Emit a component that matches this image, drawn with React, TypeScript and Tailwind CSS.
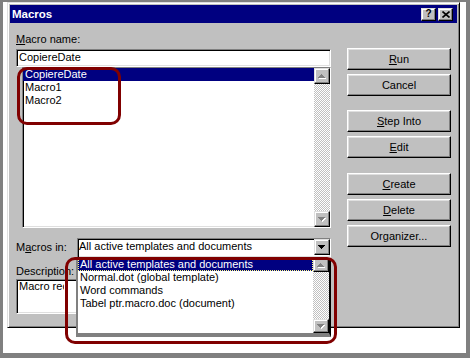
import React from "react";

const sunken =
  "border border-t-[#808080] border-l-[#808080] border-b-white border-r-white shadow-[inset_1px_1px_0_#000,inset_-1px_-1px_0_#dfdfdf]";
const raised =
  "border border-t-white border-l-white border-r-black border-b-black shadow-[inset_-1px_-1px_0_#808080,inset_1px_1px_0_#dfdfdf]";
const raisedScroll =
  "border border-t-[#dfdfdf] border-l-[#dfdfdf] border-r-black border-b-black shadow-[inset_-1px_-1px_0_#808080,inset_1px_1px_0_#ffffff]";
const dither =
  "bg-[repeating-conic-gradient(#c0c0c0_0%_25%,#ffffff_0%_50%)] bg-[length:2px_2px]";

function Tri({ dir, color, dx = 0, dy = 0 }: { dir: "up" | "down"; color: string; dx?: number; dy?: number }) {
  const rows = dir === "up" ? [0, 1, 2, 3] : [3, 2, 1, 0];
  return (
    <g fill={color}>
      {rows.map((r, i) => (
        <rect key={i} x={3 - r + dx} y={i + dy} width={2 * r + 1} height={1} />
      ))}
    </g>
  );
}

function Arrow({ dir, disabled }: { dir: "up" | "down"; disabled?: boolean }) {
  return (
    <svg width="8" height="5" viewBox="0 0 8 5" shapeRendering="crispEdges">
      {disabled && <Tri dir={dir} color="#ffffff" dx={1} dy={1} />}
      <Tri dir={dir} color={disabled ? "#808080" : "#000000"} />
    </svg>
  );
}

function ScrollBtn({ dir, disabled, h = 16 }: { dir: "up" | "down"; disabled?: boolean; h?: number }) {
  return (
    <div
      className={`w-[16px] bg-[#c0c0c0] flex items-center justify-center ${raisedScroll}`}
      style={{ height: h }}
    >
      <Arrow dir={dir} disabled={disabled} />
    </div>
  );
}

function Btn({ children }: { children: React.ReactNode }) {
  return (
    <div
      className={`w-[104px] h-[22px] bg-[#c0c0c0] flex items-center justify-center text-[11px] leading-[13px] text-black ${raised}`}
    >
      <span>{children}</span>
    </div>
  );
}

export default function App() {
  return (
    <div className="relative w-[470px] h-[358px] bg-[#808080] pt-[2px] pl-[3px] pr-[4px] pb-[5px] overflow-hidden font-['Liberation_Sans',Arial,sans-serif] text-[11px] leading-[13px] text-black">
      <div className="w-full h-full bg-white pl-[4px]">
        {/* Dialog */}
        <div className="w-[453px] h-[326px] bg-[#c0c0c0] border border-t-[#dfdfdf] border-l-[#dfdfdf] border-r-black border-b-black shadow-[inset_1px_1px_0_#fff,inset_-1px_-1px_0_#808080] p-[2px] flex flex-col">
          {/* Title bar */}
          <div className="h-[18px] bg-[#000080] flex items-center pl-[2px] pr-[4px]">
            <span className="text-white font-bold text-[11.5px] leading-[13px]">Macros</span>
            <div className="ml-auto flex gap-[2px]">
              <div className={`w-[15px] h-[13px] bg-[#c0c0c0] flex items-center justify-center ${raisedScroll}`}>
                <span className="font-bold text-[10px] leading-[10px] text-black">?</span>
              </div>
              <div className={`w-[15px] h-[13px] bg-[#c0c0c0] flex items-center justify-center ${raisedScroll}`}>
                <svg width="8" height="7" viewBox="0 0 8 7">
                  <path d="M0.5 0.5 L7.5 6.5 M7.5 0.5 L0.5 6.5" stroke="#000" strokeWidth="1.6" />
                </svg>
              </div>
            </div>
          </div>

          {/* Content */}
          <div className="flex pl-[6px]">
            {/* Left column */}
            <div className="w-[315px] flex flex-col pt-[10px]">
              <div className="h-[13px]">
                <u>M</u>acro name:
              </div>
              <div className={`mt-[3px] h-[18px] bg-white pl-[2px] pt-[1px] ${sunken}`}>CopiereDate</div>
              {/* Macro list */}
              <div className={`ml-[6px] w-[309px] h-[161px] bg-white flex ${sunken}`}>
                <div className="flex-1 flex flex-col">
                  <div className="h-[13px] bg-[#000080] text-white pl-[2px]">CopiereDate</div>
                  <div className="h-[13px] pl-[2px]">Macro1</div>
                  <div className="h-[13px] pl-[2px]">Macro2</div>
                </div>
                <div className="w-[16px] flex flex-col">
                  <ScrollBtn dir="up" disabled />
                  <div className={`flex-1 ${dither}`} />
                  <ScrollBtn dir="down" disabled />
                </div>
              </div>
              {/* Macros in */}
              <div className="mt-[10px] flex items-start">
                <div className="w-[61px] pt-[3px]">
                  M<u>a</u>cros in:
                </div>
                <div className={`w-[254px] h-[20px] bg-white flex ${sunken}`}>
                  <div className="flex-1 pl-[1px] pt-[1px] whitespace-nowrap overflow-hidden">
                    All active templates and documents
                  </div>
                  <ScrollBtn dir="down" />
                </div>
              </div>
              <div className="mt-[7px] h-[13px]">Description:</div>
              <div className={`mt-[1px] h-[35px] bg-white pl-[2px] ${sunken}`}>
                <div className="w-[45px] whitespace-nowrap overflow-hidden">Macro recorded</div>
              </div>
            </div>

            {/* Right column: buttons */}
            <div className="ml-[16px] w-[104px] flex flex-col pt-[25px]">
              <Btn>
                <u>R</u>un
              </Btn>
              <div className="mt-[4px]">
                <Btn>Cancel</Btn>
              </div>
              <div className="mt-[14px]">
                <Btn>
                  <u>S</u>tep Into
                </Btn>
              </div>
              <div className="mt-[4px]">
                <Btn>
                  <u>E</u>dit
                </Btn>
              </div>
              <div className="mt-[15px]">
                <Btn>
                  <u>C</u>reate
                </Btn>
              </div>
              <div className="mt-[4px]">
                <Btn>
                  <u>D</u>elete
                </Btn>
              </div>
              <div className="mt-[4px]">
                <Btn>
                  Or<u>g</u>anizer...
                </Btn>
              </div>
            </div>
          </div>
        </div>
      </div>

      {/* Open dropdown list overlay */}
      <div className="absolute left-[76px] top-[258px] w-[255px] h-[79px] bg-white border-l-2 border-l-[#808080] border-b-4 border-b-[#808080] border-r-2 border-r-black flex">
        <div className="flex-1 flex flex-col whitespace-nowrap overflow-hidden">
          <div className="h-[13px] bg-[#000080] text-white pl-[2px] outline outline-1 outline-dotted outline-[#ffff80] -outline-offset-1">
            All active templates and documents
          </div>
          <div className="h-[13px] pl-[2px]">Normal.dot (global template)</div>
          <div className="h-[13px] pl-[2px]">Word commands</div>
          <div className="h-[13px] pl-[2px]">Tabel ptr.macro.doc (document)</div>
        </div>
        <div className="w-[16px] flex flex-col">
          <ScrollBtn dir="up" disabled h={14} />
          <div className={`flex-1 ${dither}`} />
          <ScrollBtn dir="down" disabled h={14} />
        </div>
      </div>

      {/* Red annotation outlines */}
      <div className="absolute left-[17px] top-[67px] w-[104px] h-[58px] border-[3px] border-[#800000] rounded-[10px]" />
      <div className="absolute left-[65px] top-[257px] w-[272px] h-[87px] border-[3px] border-[#800000] rounded-[10px]" />
    </div>
  );
}
